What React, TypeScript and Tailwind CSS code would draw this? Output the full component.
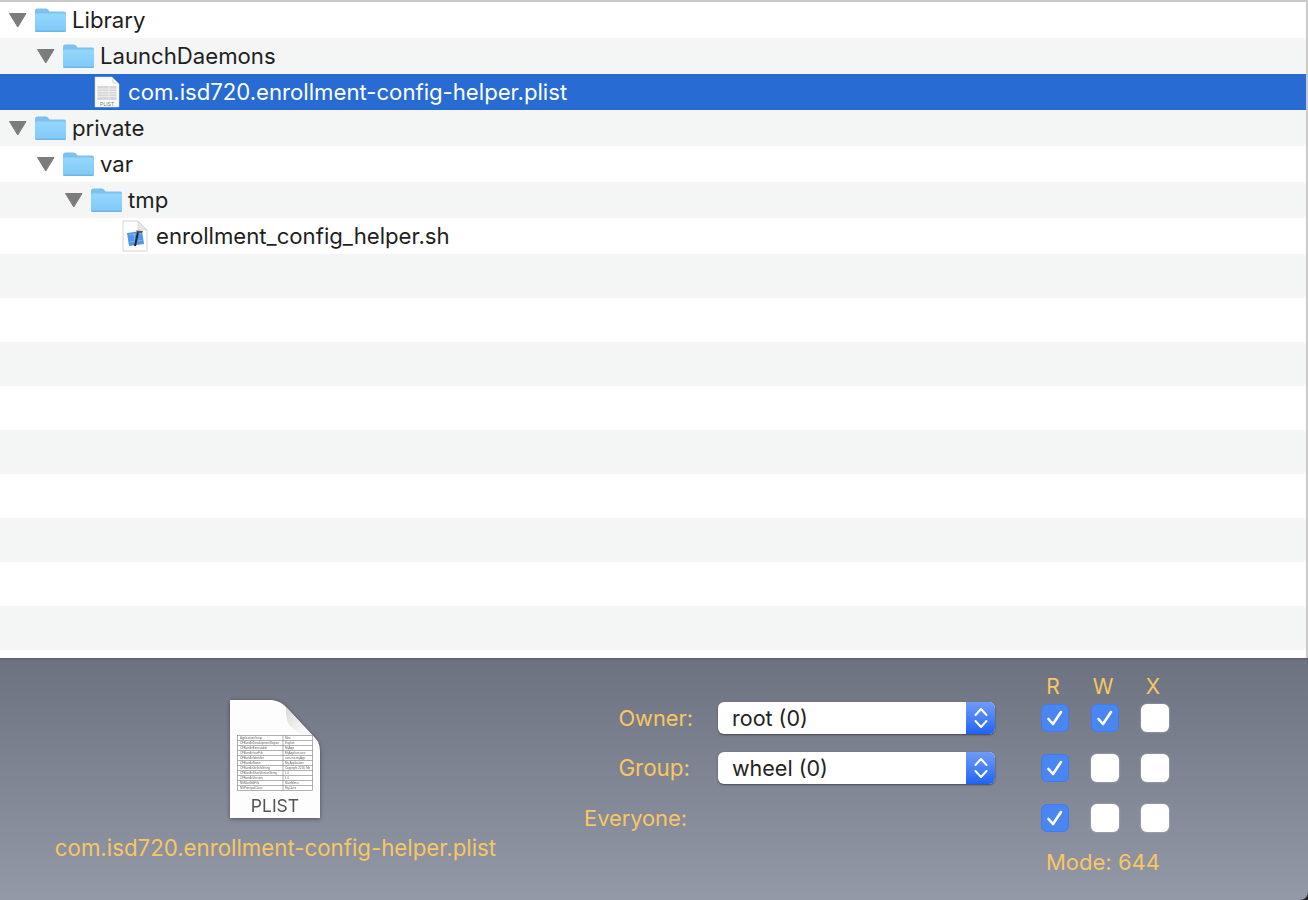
import React from "react";

const FONT = "font-['Inter','Liberation_Sans',sans-serif]";

function Triangle() {
  return (
    <svg width="19" height="16" viewBox="0 0 19 16" className="shrink-0">
      <path d="M1.5 1.5 H18 L9.75 15 Z" fill="#7c7c7c" stroke="#7c7c7c" strokeWidth="1" strokeLinejoin="round" />
    </svg>
  );
}

function Folder() {
  return (
    <svg width="33" height="26" viewBox="0 0 33 26" className="shrink-0 -ml-[1px]">
      <defs>
        <linearGradient id="fb" x1="0" y1="0" x2="0" y2="1">
          <stop offset="0" stopColor="#95d7fc" />
          <stop offset="1" stopColor="#80c9f8" />
        </linearGradient>
      </defs>
      <path d="M1 4 Q1 1.5 3.5 1.5 H12 Q13.5 1.5 14.5 3 L15.5 4.5 H30 Q32 4.5 32 6.5 V23 Q32 25 30 25 H3 Q1 25 1 23 Z" fill="#7cc2f0" />
      <path d="M1 8 Q1 6.5 3 6.5 H30 Q32 6.5 32 8 V23 Q32 24.5 30 24.5 H3 Q1 24.5 1 23 Z" fill="url(#fb)" />
      <path d="M1.5 24.2 H31.5" stroke="#66aee0" strokeWidth="1" />
    </svg>
  );
}

function SmallPlist() {
  return (
    <svg width="26" height="32" viewBox="0 0 26 32" className="shrink-0 ml-[3px]">
      <path d="M1 1 H18 L25 8 V31 H1 Z" fill="#fbfbfb" stroke="#d8d8d8" strokeWidth="0.5" />
      <path d="M18 1 Q18.5 7 25 8 Q21 8 19 7 Q18 5.5 18 1 Z" fill="#d5d5d5" />
      <rect x="3.5" y="10" width="19" height="14" fill="#d6d6d6" />
      <path d="M3.5 13 H22.5 M3.5 15.5 H22.5 M3.5 18 H22.5 M3.5 20.5 H22.5 M15 10 V24" stroke="#f3f3f3" strokeWidth="0.8" />
      <text x="13" y="29.5" textAnchor="middle" fontSize="5" fill="#777" fontFamily="Liberation Sans, sans-serif">PLIST</text>
    </svg>
  );
}

function ScriptIcon() {
  return (
    <svg width="26" height="32" viewBox="0 0 26 32" className="shrink-0 ml-[3px]">
      <path d="M1 1 H16 L25 10 V31 H1 Z" fill="#fdfdfd" stroke="#c9c9c9" strokeWidth="0.8" />
      <path d="M16 1 V10 H25 Z" fill="#e6e6e6" stroke="#c9c9c9" strokeWidth="0.5" />
      <path d="M5 13 L20 11 L22 24 L7 26 Z" fill="#4f97ea" />
      <path d="M7 15 L19 13.5 M8 22 L20 20.5 M12 13 L13 25" stroke="#8dbdf2" strokeWidth="0.8" />
      <path d="M16 12 L13 26" stroke="#20242c" strokeWidth="2" />
      <path d="M14 10.5 L21 11 L20 13 L15 12.5 Z" fill="#555" />
    </svg>
  );
}

function Row({
  level,
  label,
  icon,
  caret,
  bg,
  selected,
}: {
  level: 0 | 1 | 2 | 3;
  label: string;
  icon: React.ReactNode;
  caret?: boolean;
  bg: string;
  selected?: boolean;
}) {
  const pad = ["pl-[8px]", "pl-[36px]", "pl-[64px]", "pl-[92px]"][level];
  return (
    <div className={`h-9 flex items-center ${pad} ${bg}`}>
      <div className="w-[27px] shrink-0 flex">{caret ? <Triangle /> : null}</div>
      <div className="w-[37px] shrink-0 flex">{icon}</div>
      <span className={`text-[22.15px] mt-[2px] ${selected ? "text-white" : "text-[#1e1e1e]"}`}>{label}</span>
    </div>
  );
}

function Check({ on }: { on?: boolean }) {
  return on ? (
    <div className="w-7 h-7 rounded-[6px] bg-[#4a86f2] border border-[#3f7cec] flex items-center justify-center">
      <svg width="18" height="18" viewBox="0 0 18 18">
        <path d="M2.5 10 L7 15 L15 3" fill="none" stroke="#fff" strokeWidth="2.6" strokeLinecap="round" strokeLinejoin="round" />
      </svg>
    </div>
  ) : (
    <div className="w-7 h-7 rounded-[6px] bg-white shadow-[0_0_2px_rgba(255,255,255,0.5)]" />
  );
}

function Select({ label }: { label: string }) {
  return (
    <div className="w-[277px] h-8 flex rounded-[6px] bg-white shadow-[0_1px_2px_rgba(0,0,0,0.45)] overflow-hidden">
      <div className="flex-1 pl-[14px] flex items-center text-[21.5px] text-[#222]">{label}</div>
      <div className="w-[29px] bg-gradient-to-b from-[#6f9bf5] to-[#1f62f5] flex items-center justify-center">
        <svg width="16" height="24" viewBox="0 0 16 24">
          <path d="M2.5 9 L8 3 L13.5 9 M2.5 15 L8 21 L13.5 15" fill="none" stroke="#fff" strokeWidth="2" strokeLinecap="round" strokeLinejoin="round" />
        </svg>
      </div>
    </div>
  );
}

function BigPlist() {
  const rows = [
    ["ApplicationGroup", "Misc"],
    ["CFBundleDevelopmentRegion", "English"],
    ["CFBundleExecutable", "MyApp"],
    ["CFBundleIconFile", "MyAppIcon.icns"],
    ["CFBundleIdentifier", "com.me.myApp"],
    ["CFBundleName", "My Application"],
    ["CFBundleGetInfoString", "Copyright 2016, Me"],
    ["CFBundleShortVersionString", "1.0"],
    ["CFBundleVersion", "1.0"],
    ["NSMainNibFile", "MainMenu"],
    ["NSPrincipalClass", "MyClass"],
  ];
  return (
    <svg width="92" height="120" viewBox="0 0 92 120" className="mr-[2px] drop-shadow-[0_1px_2px_rgba(0,0,0,0.4)]">
      <defs>
        <linearGradient id="fold" x1="0" y1="0" x2="1" y2="1">
          <stop offset="0" stopColor="#d9d9d9" />
          <stop offset="0.55" stopColor="#f6f6f6" />
          <stop offset="1" stopColor="#ffffff" />
        </linearGradient>
      </defs>
      <path d="M1 1 H43 Q52 2 58 9 L85 38 Q91 44 91 52 V119 H1 Z" fill="#fdfdfd" />
      <path d="M57 9 Q56 22 62 28 Q72 37 90 44 L85 38 L58 9 Z" fill="url(#fold)" />
      <rect x="8.5" y="36.5" width="75" height="55" fill="#fff" stroke="#7a7a7a" strokeWidth="0.6" />
      <path d="M54 36.5 V91.5" stroke="#7a7a7a" strokeWidth="0.6" />
      {rows.map((r, i) => (
        <g key={r[0]}>
          {i > 0 ? <path d={`M8.5 ${36.5 + i * 5} H83.5`} stroke="#7a7a7a" strokeWidth="0.6" /> : null}
          <text x="11" y={40.2 + i * 5} fontSize="2.9" fill="#666" fontFamily="Liberation Sans, sans-serif">{r[0]}</text>
          <text x="56" y={40.2 + i * 5} fontSize="2.9" fill="#666" fontFamily="Liberation Sans, sans-serif">{r[1]}</text>
        </g>
      ))}
      <text x="46" y="113" textAnchor="middle" fontSize="17.5" fill="#555" fontFamily="Inter, Liberation Sans, sans-serif">PLIST</text>
    </svg>
  );
}

export default function App() {
  const plain = "bg-white";
  const alt = "bg-[#f4f5f5]";
  const stripes = [alt, plain, alt, plain, alt, plain, alt, plain, alt];
  return (
    <div className={`${FONT} w-[1308px] h-[900px] overflow-hidden flex flex-col bg-[#26262a] relative`}>
      <div className="h-[658px] shrink-0 flex flex-col bg-white border-t-2 border-t-[#c9c9c9] border-r-2 border-r-[#c9c9c9]">
        <Row level={0} caret label="Library" icon={<Folder />} bg={plain} />
        <Row level={1} caret label="LaunchDaemons" icon={<Folder />} bg={alt} />
        <Row level={2} label="com.isd720.enrollment-config-helper.plist" icon={<SmallPlist />} bg="bg-[#276bd3]" selected />
        <Row level={0} caret label="private" icon={<Folder />} bg={alt} />
        <Row level={1} caret label="var" icon={<Folder />} bg={plain} />
        <Row level={2} caret label="tmp" icon={<Folder />} bg={alt} />
        <Row level={3} label="enrollment_config_helper.sh" icon={<ScriptIcon />} bg={plain} />
        {stripes.map((c, i) => (
          <div key={i} className={`h-11 shrink-0 ${c}`} />
        ))}
      </div>

      <div className="flex-1 flex bg-gradient-to-b from-[#6d7280] to-[#9399a7] text-[#f7c764] rounded-br-[8px] relative">
        <div className="absolute inset-x-0 top-0 h-[3px] bg-gradient-to-b from-[#5e6270] to-transparent" />
        <div className="w-[551px] shrink-0 flex flex-col items-center pt-[41px]">
          <BigPlist />
          <div className="text-[22.25px] mt-[14px] leading-[30px] whitespace-nowrap">com.isd720.enrollment-config-helper.plist</div>
        </div>
        <div className="ml-[1px] pt-[18px] flex flex-col">
          <div className="flex pl-[487px] h-[22px] items-center text-[21px]">
            <span className="w-7 text-center mr-[22px]">R</span>
            <span className="w-7 text-center mr-[22px]">W</span>
            <span className="w-7 text-center">X</span>
          </div>
          <div className="flex items-center mt-[4px] h-8">
            <span className="w-[141px] text-right text-[21.8px]">Owner:</span>
            <div className="ml-[25px]"><Select label="root (0)" /></div>
            <div className="ml-[46px] flex gap-[22px]"><Check on /><Check on /><Check /></div>
          </div>
          <div className="flex items-center mt-[18px] h-8">
            <span className="w-[138px] text-right text-[22.4px]">Group:</span>
            <div className="ml-[28px]"><Select label="wheel (0)" /></div>
            <div className="ml-[46px] flex gap-[22px]"><Check on /><Check /><Check /></div>
          </div>
          <div className="flex items-center mt-[18px] h-8">
            <span className="w-[135px] text-right text-[21.8px]">Everyone:</span>
            <div className="ml-[354px] flex gap-[22px]"><Check on /><Check /><Check /></div>
          </div>
          <div className="pl-[494px] mt-[13px] text-[22px] leading-[30px] whitespace-nowrap">Mode: 644</div>
        </div>
      </div>
    </div>
  );
}
